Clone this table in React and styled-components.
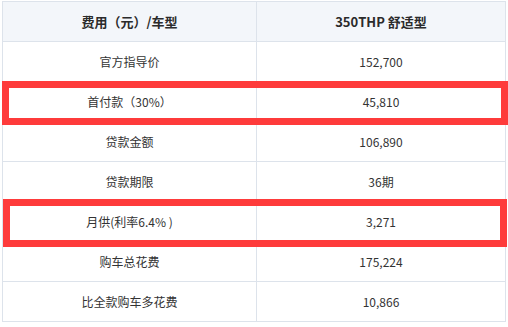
import React from "react";
import styled, { createGlobalStyle } from "styled-components";

const rows = [
  { id: 1, label: "官方指导价", value: "152,700" },
  { id: 2, label: "首付款（30%）", value: "45,810" },
  { id: 3, label: "贷款金额", value: "106,890" },
  { id: 4, label: "贷款期限", value: "36期" },
  { id: 5, label: "月供(利率6.4% )", value: "3,271" },
  { id: 6, label: "购车总花费", value: "175,224" },
  { id: 7, label: "比全款购车多花费", value: "10,866" },
];

const marks = [
  { id: 1, left: 2, top: 81, width: 506, height: 44 },
  { id: 2, left: 3, top: 199, width: 504, height: 48 },
];

const GlobalStyle = createGlobalStyle`
  html, body {
    margin: 0;
    padding: 0;
    background: #fff;
  }
  body {
    font-family: "Noto Sans CJK SC", "Noto Sans", sans-serif;
    color: #333;
  }
`;

const StyledPage = styled.div`
  position: relative;
  width: 508px;
  height: 327px;
  padding: 1px 0 0 2px;
  box-sizing: border-box;
`;
const StyledTable = styled.div`
  width: 504px;
  border: 1px solid #dde3eb;
  border-bottom: none;
  box-sizing: border-box;
`;
const StyledRow = styled.div`
  display: grid;
  grid-template-columns: 254px 1fr;
  height: 40px;
  border-bottom: 1px solid #dde3eb;
  box-sizing: border-box;
  background: ${(p) => (p.$head ? "#f3f6fa" : "#fff")};
`;
const StyledCell = styled.div`
  display: flex;
  align-items: center;
  justify-content: center;
  box-sizing: border-box;
  font-size: ${(p) => (p.$head ? "13px" : "12px")};
  font-weight: ${(p) => (p.$head ? 700 : 400)};
  color: ${(p) => (p.$head ? "#2b2b2b" : "#333")};
  border-right: ${(p) => (p.$first ? "1px solid #dde3eb" : "none")};
`;
const StyledMark = styled.div`
  position: absolute;
  border: 7px solid #fe3b3b;
  box-sizing: border-box;
  pointer-events: none;
`;

function App() {
  return (
    <>
      <GlobalStyle />
      <StyledPage>
        <StyledTable>
          <StyledRow $head>
            <StyledCell $head $first>
              费用（元）/车型
            </StyledCell>
            <StyledCell $head>350THP 舒适型</StyledCell>
          </StyledRow>
          {rows.map((row) => (
            <StyledRow key={row.id}>
              <StyledCell $first>{row.label}</StyledCell>
              <StyledCell>{row.value}</StyledCell>
            </StyledRow>
          ))}
        </StyledTable>
        {marks.map((m) => (
          <StyledMark
            key={m.id}
            style={{ left: m.left, top: m.top, width: m.width, height: m.height }}
          />
        ))}
      </StyledPage>
    </>
  );
}

export default App;
